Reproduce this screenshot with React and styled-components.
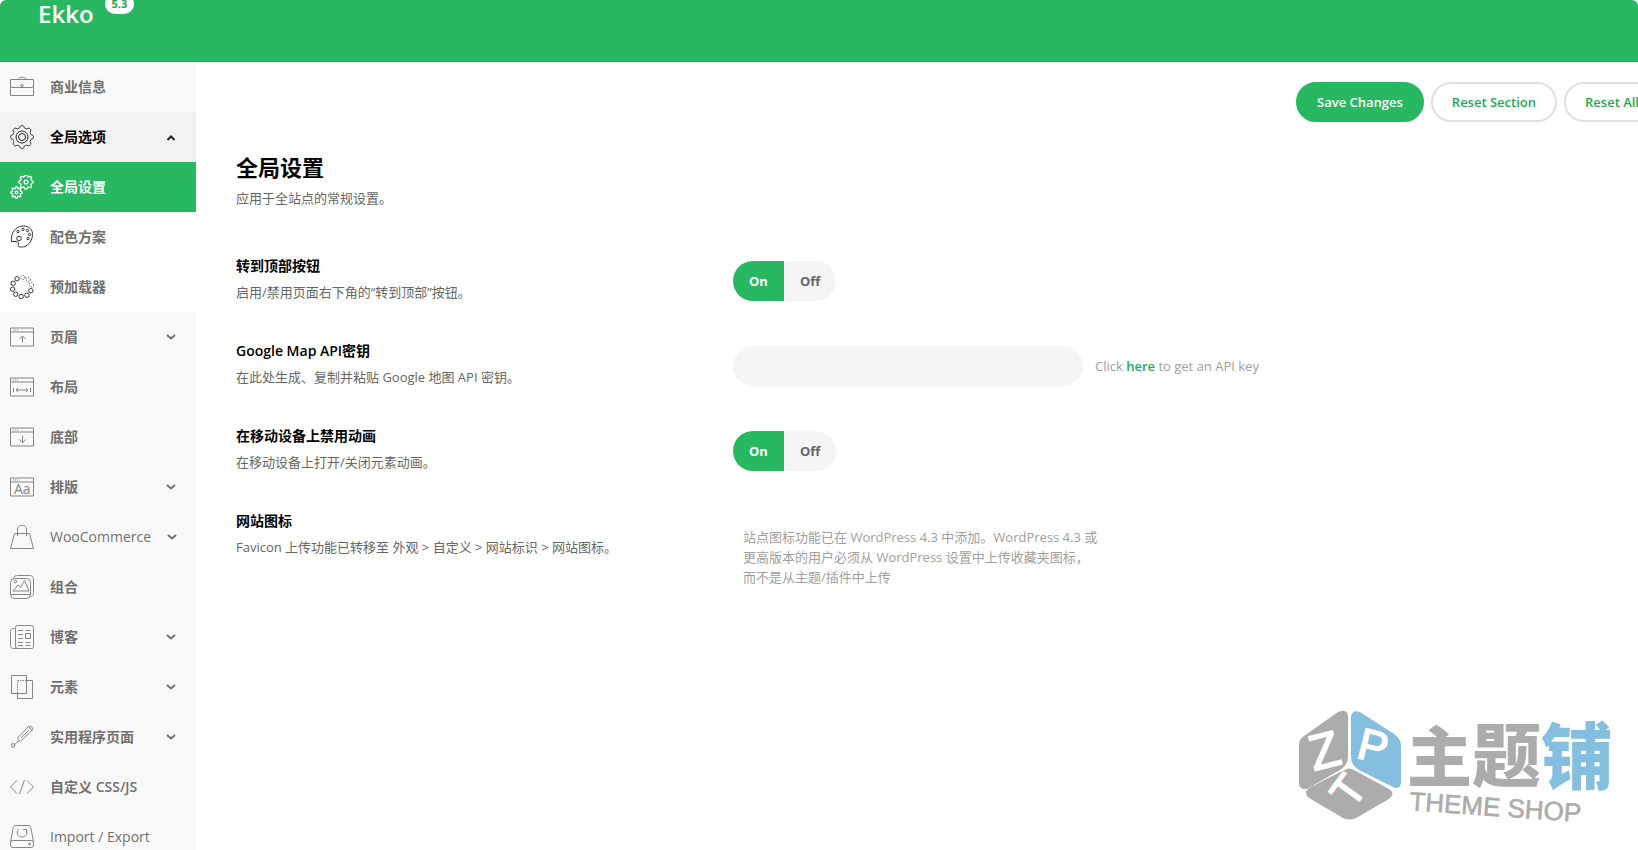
import React, { useState } from "react";
import styled, { createGlobalStyle, css } from "styled-components";

// outline of a cog, sampled around its centre
const cog = (cx, cy, r, depth, teeth) => {
  const points = [];
  const steps = teeth * 16;
  for (let i = 0; i < steps; i++) {
    const angle = (i / steps) * Math.PI * 2;
    const wave = Math.max(-1, Math.min(1, Math.cos(angle * teeth) * 1.6));
    const radius = r + wave * depth;
    const x = cx + radius * Math.sin(angle);
    const y = cy - radius * Math.cos(angle);
    points.push(`${x.toFixed(2)} ${y.toFixed(2)}`);
  }
  return `M${points.join("L")}Z`;
};

const dots = Array.from({ length: 10 }, (_, i) => {
  const angle = ((i * 36 + 5) * Math.PI) / 180;
  return {
    cx: 12 + 9.6 * Math.sin(angle),
    cy: 12 - 9.6 * Math.cos(angle),
    faded: i < 3,
  };
});

const frame = (
  <>
    <path d="M.5 3h23v18H.5zM.5 7h23" />
    <path d="M3 5h1M5 5h1M7 5h1" />
  </>
);

const icons = {
  briefcase: (
    <>
      <path d="M.5 4.500h23v16H.5zM8 4.500c0-3 8-3 8 0M.5 10c0 2 1 2.500 2.500 2.500H21c1.500 0 2.500-.5 2.500-2.500" />
      <circle cx="12" cy="10.500" r="1.200" />
    </>
  ),
  gear: (
    <>
      <path d={cog(12, 12, 10.3, 1.1, 8)} />
      <circle cx="12" cy="12" r="6" />
      <circle cx="12" cy="12" r="3.500" />
    </>
  ),
  gears: (
    <g strokeWidth="1.300">
      <path d={cog(16, 7, 6.4, 0.8, 8)} />
      <circle cx="16" cy="7" r="1.900" />
      <path d={cog(6.5, 17.5, 4.9, 0.7, 8)} />
      <circle cx="6.500" cy="17.500" r="1.400" />
    </g>
  ),
  palette: (
    <>
      <path d="M1.500 16.500C.5 8 5.500 1 13.500 1c6 0 9.500 4 9 9.500-.6 6.500-5.500 11.500-11 11.500-2 0-3.200-.3-3.500-.8-.3-1 .8-2 .6-3-.3-1.300-2-1.900-3.600-1.700z" />
      <circle cx="9" cy="13.500" r="2.300" />
      <circle cx="8" cy="6.500" r="1.200" />
      <circle cx="13" cy="4.500" r="1.200" />
      <circle cx="17.500" cy="5.500" r="1.200" />
      <circle cx="19.500" cy="9.500" r="1.200" />
      <circle cx="18" cy="13.500" r="1.200" />
    </>
  ),
  loader: dots.map(({ cx, cy, faded }) => (
    <circle
      key={cx}
      cx={cx}
      cy={cy}
      r="2.200"
      strokeDasharray={faded ? "1 1.300" : undefined}
    />
  )),
  header: (
    <>
      {frame}
      <path d="M12.500 17.500v-6M9.500 14l3-3 3 3" />
    </>
  ),
  layout: (
    <>
      {frame}
      <path d="M3.500 13v4M20.500 13v4M6 15h12M8 13l-2 2 2 2M16 13l2 2-2 2" />
    </>
  ),
  footer: (
    <>
      {frame}
      <path d="M12.500 10.500v7M9.500 14.500l3 3 3-3" />
    </>
  ),
  type: (
    <>
      {frame}
      <text
        x="4"
        y="19"
        fontSize="14"
        fontWeight="400"
        stroke="none"
        fill="currentColor"
      >
        Aa
      </text>
    </>
  ),
  bag: (
    <path d="M4.500 8.500h15l4 15H.5zM7.500 11V4c0-5 9-5 9 0v7" />
  ),
  images: (
    <>
      <rect x=".5" y="3.500" width="20" height="20" rx="4" />
      <path d="M3.500 3.500c.5-2 2-3 4-3h12c2.500 0 4 1.500 4 4v13c0 2.500-1 4-3 4.500M.5 19.500h20M3 16l5-6 2.500 2.500 4-7L19 16z" />
      <circle cx="5.500" cy="6.500" r="1.300" />
    </>
  ),
  news: (
    <>
      <rect x="5.500" y=".5" width="18" height="23" rx="2" />
      <path d="M5.500 3.500c-3 0-5 0-5 3v14c0 2 1 3 3 3h4M8 5.500h5M15.500 5.500h5M8 9.500h5M8 13.500h5M8 17.500h5M15.500 17.500h5M8 20.500h5M15.500 20.500h5" />
      <path d="M15.500 8.500h5v5h-5z" />
    </>
  ),
  layers: (
    <>
      <path d="M1.500.5h15v18h-15zM17 5.500h5.500v18h-15V19" />
      <path d="M7.500 18V5.500H16" strokeDasharray="1.500 1" />
    </>
  ),
  tool: (
    <>
      <path d="M8 14c-1-1 0-1.500 1-2.500l9-9.500c3-2.500 6 1.500 3.500 4L12 15c-1.500 1.500-2.500 1.500-4-1zM9 15.500l-5.500 5M11 13l8-8M19 2l2.500 3" />
      <circle cx="3" cy="20.500" r="1.900" />
    </>
  ),
  code: <path d="M7 5.500L.5 12 7 18.500M17 5.500l6.500 6.500L17 18.500M14.500 5l-5 14" />,
  drive: (
    <>
      <path d="M.5 17L3 3.500C3.400 1.500 4 .5 6 .5h12c2 0 2.600 1 3 3L23.500 17" />
      <rect x=".5" y="15.500" width="23" height="7" rx="2.500" />
      <circle cx="19.500" cy="19" r="1" />
      <path d="M8.500 4C5.500 8 8 12 12 12s6.500-4 4-7.500M13 4.500h3.500V8" />
    </>
  ),
};

const menu = [
  { label: "商业信息", icon: "briefcase" },
  {
    label: "全局选项",
    icon: "gear",
    open: true,
    items: [
      { label: "全局设置", icon: "gears", active: true },
      { label: "配色方案", icon: "palette" },
      { label: "预加载器", icon: "loader" },
    ],
  },
  { label: "页眉", icon: "header", more: true },
  { label: "布局", icon: "layout" },
  { label: "底部", icon: "footer" },
  { label: "排版", icon: "type", more: true },
  { label: "WooCommerce", icon: "bag", more: true, latin: true },
  { label: "组合", icon: "images" },
  { label: "博客", icon: "news", more: true },
  { label: "元素", icon: "layers", more: true },
  { label: "实用程序页面", icon: "tool", more: true },
  { label: "自定义 CSS/JS", icon: "code" },
  { label: "Import / Export", icon: "drive", latin: true },
];

const Chevron = ({ up }) => (
  <Arrow viewBox="0 0 10 10" aria-hidden="true">
    <path d={up ? "M1.500 8L5 4.500 8.500 8" : "M1 3L5 6.500 9 3"} />
  </Arrow>
);

const MenuItem = ({ item, child }) => (
  <li>
    <MenuLink
      href="#"
      $open={item.open}
      $active={item.active}
      $child={child}
      $latin={item.latin}
    >
      <Icon viewBox="0 0 24 24" aria-hidden="true">
        {icons[item.icon]}
      </Icon>
      <span>{item.label}</span>
      {(item.more || item.open) && <Chevron up={item.open} />}
    </MenuLink>
    {item.items && (
      <MenuList>
        {item.items.map((sub) => (
          <MenuItem key={sub.label} item={sub} child />
        ))}
      </MenuList>
    )}
  </li>
);

const Switch = ({ name, labelledBy }) => {
  const [value, setValue] = useState("On");

  return (
    <SwitchGroup role="radiogroup" aria-labelledby={labelledBy}>
      {["On", "Off"].map((option) => (
        <SwitchOption key={option} $selected={value === option}>
          <input
            type="radio"
            name={name}
            value={option}
            checked={value === option}
            onChange={() => setValue(option)}
          />
          {option}
        </SwitchOption>
      ))}
    </SwitchGroup>
  );
};

const Watermark = () => (
  <Mark viewBox="0 0 316 116" role="img" aria-label="主题铺 Theme Shop">
    <g fill="#acacac">
      <path d="M6 28L40 4q10-4 10 5v40q0 8-8 13L9 81q-8 1-8-6V37q0-6 5-9z" />
      <path d="M11 80l35-18q5-3 10 0l35 19q7 4 0 10l-33 19q-6 3-13 0L11 90q-6-5 0-10z" />
    </g>
    <path
      fill="#84bfe0"
      d="M53 9q1-8 9-5l34 22q7 5 7 12v37q-1 7-8 4L61 62q-8-5-8-13z"
    />
    <g
      fill="#fff"
      stroke="#fff"
      strokeWidth="1.500"
      fontFamily="Liberation Sans"
    >
      <text x="11" y="60" fontSize="50" transform="rotate(-14 26 42)">
        Z
      </text>
      <text x="60" y="53" fontSize="44" transform="rotate(14 74 40)">
        P
      </text>
      <text x="37" y="98" fontSize="44" transform="rotate(-54 50 83)">
        T
      </text>
    </g>
    <g fontFamily="Noto Sans CJK SC" fontWeight="900">
      <text x="109" y="73" fontSize="65" fill="#acacac">
        主
      </text>
      <text x="174" y="73" fontSize="69" fill="#acacac">
        题
      </text>
      <text x="243" y="75" fontSize="72" fill="#84bfe0">
        铺
      </text>
    </g>
    <text
      x="111"
      y="102"
      fontSize="26"
      fill="#acacac"
      stroke="#acacac"
      strokeWidth=".6"
      fontFamily="Liberation Sans"
      transform="rotate(4 111 102)"
    >
      THEME SHOP
    </text>
  </Mark>
);

const App = () => (
  <Shell>
    <GlobalStyle />
    <Header>
      <Brand>
        <h1>Ekko</h1>
        <Version>5.3</Version>
      </Brand>
    </Header>
    <Body>
      <Sidebar>
        <MenuList>
          {menu.map((item) => (
            <MenuItem key={item.label} item={item} />
          ))}
        </MenuList>
      </Sidebar>
      <Main>
        <Toolbar>
          <Button type="submit" $primary>
            Save Changes
          </Button>
          <Button type="button">Reset Section</Button>
          <Button type="button">Reset All</Button>
        </Toolbar>
        <Intro>
          <h2>全局设置</h2>
          <p>应用于全站点的常规设置。</p>
        </Intro>
        <Field>
          <FieldText>
            <h3 id="to-top">转到顶部按钮</h3>
            <p>启用/禁用页面右下角的“转到顶部”按钮。</p>
          </FieldText>
          <Control>
            <Switch name="to-top" labelledBy="to-top" />
          </Control>
        </Field>
        <Field>
          <FieldText>
            <h3>
              <label htmlFor="map-key">Google Map API密钥</label>
            </h3>
            <p>在此处生成、复制并粘贴 Google 地图 API 密钥。</p>
          </FieldText>
          <Control>
            <TextInput id="map-key" type="text" />
            <Hint>
              Click <a href="#">here</a> to get an API key
            </Hint>
          </Control>
        </Field>
        <Field>
          <FieldText>
            <h3 id="animations">在移动设备上禁用动画</h3>
            <p>在移动设备上打开/关闭元素动画。</p>
          </FieldText>
          <Control>
            <Switch name="animations" labelledBy="animations" />
          </Control>
        </Field>
        <Field>
          <FieldText>
            <h3>网站图标</h3>
            <p>Favicon 上传功能已转移至 外观 &gt; 自定义 &gt; 网站标识 &gt; 网站图标。</p>
          </FieldText>
          <Note>
            站点图标功能已在 WordPress 4.3 中添加。WordPress 4.3 或
            更高版本的用户必须从 WordPress 设置中上传收藏夹图标，而不是从主题/插件中上传
          </Note>
        </Field>
      </Main>
    </Body>
    <Watermark />
  </Shell>
);

const GlobalStyle = createGlobalStyle`
  html {
    scrollbar-width: none;
  }

  body {
    margin: 0;
    background: #fff;
    color: #666;
    font-family: "Open Sans", "Noto Sans CJK SC", sans-serif;
    font-size: 13px;
    line-height: 20px;
  }

  *, *::before, *::after {
    box-sizing: border-box;
  }

  h1, h2, h3, p, ul {
    margin: 0;
    padding: 0;
  }
`;

const Shell = styled.div`
  position: relative;
  height: 100vh;
  display: flex;
  flex-direction: column;
  overflow: hidden;
`;

const Header = styled.header`
  flex: none;
  height: 62px;
  padding-left: 38px;
  background: #28b862;
  border-bottom: 1px solid #22a956;
  border-radius: 6px 6px 0 0;
`;

const Brand = styled.div`
  display: flex;
  align-items: flex-start;
  gap: 11px;
  margin-top: -6px;

  h1 {
    color: #fff;
    font-size: 24px;
    font-weight: 600;
    line-height: 40px;
  }
`;

const Version = styled.span`
  padding: 0 7px;
  border-radius: 10px;
  background: #fff;
  color: #23a455;
  font-size: 11px;
  font-weight: 700;
  line-height: 20px;
`;

const Body = styled.div`
  flex: 1;
  min-height: 0;
  display: flex;
`;

const Sidebar = styled.nav`
  flex: none;
  width: 196px;
  overflow: hidden;
  background: #f9f9f9;
`;

const MenuList = styled.ul`
  list-style: none;
`;

const MenuLink = styled.a`
  display: flex;
  align-items: center;
  gap: 16px;
  height: 50px;
  padding: 0 20px 0 10px;
  color: #707070;
  font-size: 14px;
  font-weight: ${({ $latin }) => ($latin ? 500 : 600)};
  text-decoration: none;
  white-space: nowrap;

  ${({ $child }) =>
    $child &&
    css`
      background: #fff;

      svg {
        color: #333;
      }
    `}

  ${({ $open }) =>
    $open &&
    css`
      background: #f2f2f2;
      color: #000;

      svg {
        color: #222;
      }
    `}

  ${({ $active }) =>
    $active &&
    css`
      background: #28b862;
      color: #fff;

      svg {
        color: #fff;
      }
    `}
`;

const Icon = styled.svg`
  flex: none;
  width: 24px;
  height: 24px;
  color: #858585;
  fill: none;
  stroke: currentColor;
`;

const Arrow = styled.svg`
  flex: none;
  width: 10px;
  height: 10px;
  margin-left: auto;
  fill: none;
  stroke: currentColor;
  stroke-width: 2;
`;

const Main = styled.main`
  flex: 1;
  min-width: 0;
  padding: 20px 0 0 40px;
`;

// the last button runs past the edge of the window
const Toolbar = styled.div`
  display: flex;
  justify-content: flex-end;
  gap: 7px;
  margin-right: -22px;
`;

const Button = styled.button`
  height: 40px;
  padding: 0 19px;
  border: 2px solid ${({ $primary }) => ($primary ? "#28b862" : "#e0e0e0")};
  border-radius: 20px;
  background: ${({ $primary }) => ($primary ? "#28b862" : "#fff")};
  color: ${({ $primary }) => ($primary ? "#fff" : "#22a956")};
  font-family: inherit;
  font-size: 13px;
  font-weight: 600;
  white-space: nowrap;
`;

const Intro = styled.div`
  padding: 29px 0 48px;

  h2 {
    margin-bottom: 5px;
    color: #000;
    font-size: 22px;
    font-weight: 700;
    line-height: 32px;
  }
`;

const Field = styled.section`
  display: flex;
  min-height: 85px;
`;

const FieldText = styled.div`
  flex: none;
  width: 497px;

  h3 {
    margin-bottom: 6px;
    color: #000;
    font-size: 14px;
    font-weight: 600;
    line-height: 20px;
  }
`;

const Control = styled.div`
  display: flex;
  align-items: center;
  gap: 12px;
  height: 50px;
`;

const SwitchGroup = styled.div`
  display: flex;
  overflow: hidden;
  border-radius: 20px;
`;

const SwitchOption = styled.label`
  padding: 0 16px;
  background: ${({ $selected }) => ($selected ? "#28b862" : "#f5f5f5")};
  color: ${({ $selected }) => ($selected ? "#fff" : "#666")};
  font-weight: 700;
  line-height: 40px;
  cursor: pointer;

  input {
    position: absolute;
    opacity: 0;
    pointer-events: none;
  }
`;

const TextInput = styled.input`
  width: 350px;
  height: 40px;
  padding: 0 20px;
  border: 0;
  border-radius: 20px;
  background: #f5f5f5;
  font: inherit;
`;

const Hint = styled.p`
  color: #a0a0a0;

  a {
    color: #22a956;
    font-weight: 600;
    text-decoration: none;
  }
`;

const Note = styled.p`
  width: 367px;
  padding: 16px 0 0 10px;
  color: #a0a0a0;
`;

const Mark = styled.svg`
  position: absolute;
  right: 24px;
  bottom: 26px;
  width: 316px;
  height: 116px;
  overflow: visible;
  pointer-events: none;
`;

export default App;
